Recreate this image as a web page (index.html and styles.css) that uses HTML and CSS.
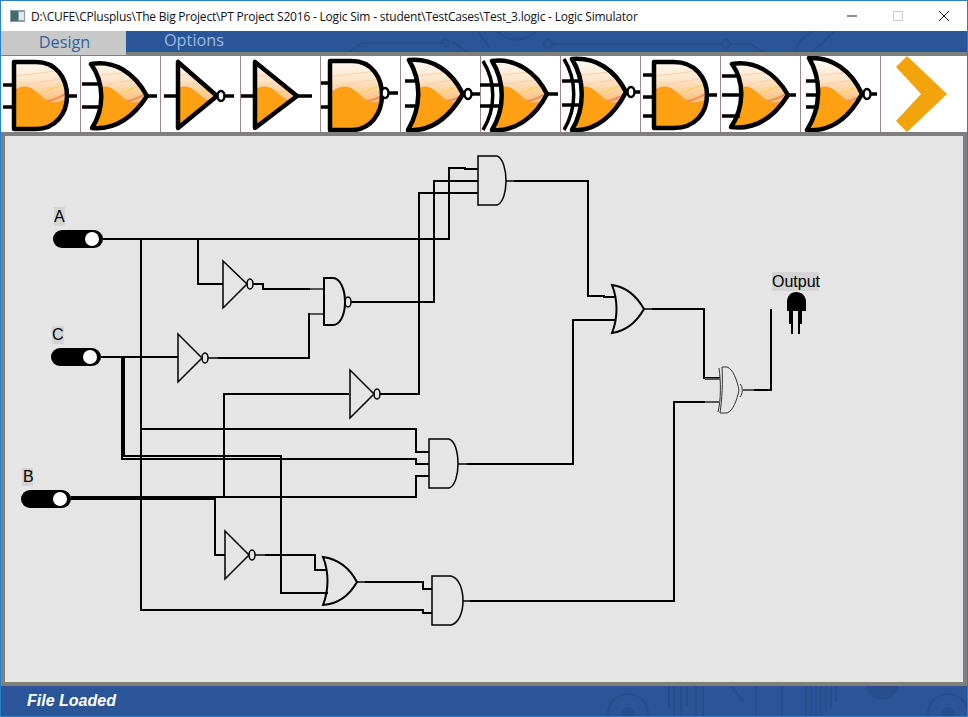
FILE: index.html
```html
<!DOCTYPE html>
<html lang="en">
<head>
    <meta charset="UTF-8">
    <title>Logic Simulator</title>
    <link rel="stylesheet" href="styles.css">
</head>
<body>

<svg class="defs" width="0" height="0">
    <defs>
        <linearGradient id="glow" x1="0" y1="0" x2="0" y2="1">
            <stop offset="0" stop-color="#ffffff"/>
            <stop offset="0.3" stop-color="#fde6cc"/>
            <stop offset="0.6" stop-color="#fbc07a"/>
        </linearGradient>

        <!-- gate bodies, one place each so fill and outline stay the same -->
        <path id="and-body" d="M14 6H36C56 6 67 22 67 40C67 58 55 73 36 73H14Z"/>
        <path id="or-body" d="M11 8C34 4 54 16 67 40C54 60 36 74 12 72C25 52 24 26 11 8Z"/>
        <path id="not-body" d="M18 6V72L57 40Z"/>
        <path id="buf-body" d="M15 6V72L57 40Z"/>
        <path id="nand-body" d="M10 5H32C52 5 62 22 62 39C62 58 50 74 32 74H10Z"/>
        <path id="nor-body" d="M9 4C32 2 51 14 63 38C50 60 32 76 8 74C21 52 22 26 9 4Z"/>
        <path id="xor-body" d="M12 5C36 2 56 16 67 38C56 60 36 76 12 74C25 52 25 26 12 5Z"/>
        <path id="xnor-body" d="M12 3C36 1 55 14 66 36C55 58 36 76 12 74C25 52 25 24 12 3Z"/>
        <path id="and3-body" d="M14 6H34C55 6 67 22 67 39C67 57 55 72 34 72H14Z"/>
        <path id="or3-body" d="M12 8C34 4 55 16 68 39C55 60 36 74 11 71C24 52 25 26 12 8Z"/>
        <path id="nor3-body" d="M9 2C32 1 51 14 62 38C50 60 32 76 7 74C21 52 22 24 9 2Z"/>

        <clipPath id="clip-and"><use href="#and-body"/></clipPath>
        <clipPath id="clip-or"><use href="#or-body"/></clipPath>
        <clipPath id="clip-not"><use href="#not-body"/></clipPath>
        <clipPath id="clip-buf"><use href="#buf-body"/></clipPath>
        <clipPath id="clip-nand"><use href="#nand-body"/></clipPath>
        <clipPath id="clip-nor"><use href="#nor-body"/></clipPath>
        <clipPath id="clip-xor"><use href="#xor-body"/></clipPath>
        <clipPath id="clip-xnor"><use href="#xnor-body"/></clipPath>
        <clipPath id="clip-and3"><use href="#and3-body"/></clipPath>
        <clipPath id="clip-or3"><use href="#or3-body"/></clipPath>
        <clipPath id="clip-nor3"><use href="#nor3-body"/></clipPath>

        <!-- the orange hill inside every toolbar gate -->
        <g id="fill">
            <rect x="0" y="0" width="80" height="76" fill="url(#glow)"/>
            <path d="M0 22L80 12M0 32L80 20" stroke="#fcd0a4" stroke-width="1" fill="none"/>
            <path d="M30 40L72 26" stroke="#ffd23c" stroke-width="1" fill="none"/>
            <path d="M40 46C50 46 60 42 72 34" stroke="#f58a5a" stroke-width="2" fill="none"/>
            <path d="M0 50C8 38 16 31 25 31C36 31 42 46 54 47C62 47 68 42 80 38V76H0Z" fill="#ffa012" stroke="#f29a2e"/>
        </g>
    </defs>
</svg>

<div class="window">

    <div class="titlebar">
        <svg class="app-icon" width="15" height="12" viewBox="0 0 15 12">
            <rect width="15" height="12" fill="#8d9ba6"/>
            <rect x="1" y="1" width="7" height="10" fill="#3f6f68"/>
            <rect x="9" y="2" width="5" height="8" fill="#dfe6ec"/>
        </svg>
        <span class="title">D:\CUFE\CPlusplus\The Big Project\PT Project S2016 - Logic Sim - student\TestCases\Test_3.logic - Logic Simulator</span>
        <div class="controls">
            <svg width="46" height="30" viewBox="0 0 46 30"><path d="M18 15H28" stroke="#222" fill="none"/></svg>
            <svg width="46" height="30" viewBox="0 0 46 30"><rect x="18.5" y="10.5" width="9" height="9" stroke="#ccc" fill="none"/></svg>
            <svg width="46" height="30" viewBox="0 0 46 30"><path d="M18 10L28 20M28 10L18 20" stroke="#222" fill="none"/></svg>
        </div>
    </div>

    <div class="menubar">
        <svg class="traces" width="966" height="21" viewBox="1 31 966 21">
            <path d="M347 54L362 43H445"/>
            <circle cx="445" cy="43" r="3.5"/>
            <path d="M450 40L478 60M475 28L490 48"/>
            <path d="M490 24C505 44 525 44 540 28" stroke-width="4"/>
            <circle cx="548" cy="44" r="4"/>
            <path d="M552 44H723" stroke-width="4"/>
            <circle cx="726" cy="44" r="4"/>
            <path d="M730 44H750L766 54"/>
            <path d="M795 54C797 40 806 30 830 28" stroke-width="8"/>
            <path d="M810 54L836 30" stroke-width="8"/>
        </svg>
        <div class="tab tab-on">Design</div>
        <div class="tab">Options</div>
    </div>

    <div class="toolbar">
        <div class="tool">
            <svg viewBox="0 0 80 76"><use href="#fill" clip-path="url(#clip-and)"/><use href="#and-body" class="outline"/><path class="pin" d="M3 29H14M3 51H14M67 40H77"/></svg>
        </div>
        <div class="tool">
            <svg viewBox="0 0 80 76"><use href="#fill" clip-path="url(#clip-or)"/><use href="#or-body" class="outline"/><path class="pin" d="M2 28H21M2 51H21M67 40H77"/></svg>
        </div>
        <div class="tool">
            <svg viewBox="0 0 80 76"><use href="#fill" clip-path="url(#clip-not)"/><use href="#not-body" class="outline"/><ellipse class="bubble" cx="61" cy="40" rx="3.5" ry="5"/><path class="pin" d="M4 40H18M65 40H74"/></svg>
        </div>
        <div class="tool">
            <svg viewBox="0 0 80 76"><use href="#fill" clip-path="url(#clip-buf)"/><use href="#buf-body" class="outline"/><path class="pin" d="M1 40H15M57 40H72"/></svg>
        </div>
        <div class="tool">
            <svg viewBox="0 0 80 76"><use href="#fill" clip-path="url(#clip-nand)"/><use href="#nand-body" class="outline"/><ellipse class="bubble" cx="65" cy="37" rx="3.5" ry="5"/><path class="pin" d="M1 27H10M1 51H10M69 37H78"/></svg>
        </div>
        <div class="tool">
            <svg viewBox="0 0 80 76"><use href="#fill" clip-path="url(#clip-nor)"/><use href="#nor-body" class="outline"/><ellipse class="bubble" cx="68" cy="38" rx="3.5" ry="5"/><path class="pin" d="M5 25H19M5 50H19M72 38H80"/></svg>
        </div>
        <div class="tool">
            <svg viewBox="0 0 80 76"><use href="#fill" clip-path="url(#clip-xor)"/><use href="#xor-body" class="outline"/><path class="arc" d="M3 5C16 26 16 52 3 74"/><path class="pin" d="M0 29H20M0 50H20M67 38H78"/></svg>
        </div>
        <div class="tool">
            <svg viewBox="0 0 80 76"><use href="#fill" clip-path="url(#clip-xnor)"/><use href="#xnor-body" class="outline"/><path class="arc" d="M4 3C17 24 17 52 4 74"/><ellipse class="bubble" cx="71" cy="36" rx="3.5" ry="5"/><path class="pin" d="M2 25H20M2 49H20M75 36H80"/></svg>
        </div>
        <div class="tool">
            <svg viewBox="0 0 80 76"><use href="#fill" clip-path="url(#clip-and3)"/><use href="#and3-body" class="outline"/><path class="pin" d="M3 19H14M3 41H14M3 60H14M67 39H77"/></svg>
        </div>
        <div class="tool">
            <svg viewBox="0 0 80 76"><use href="#fill" clip-path="url(#clip-or3)"/><use href="#or3-body" class="outline"/><path class="pin" d="M2 20H20M2 39H22M2 60H20M68 39H76"/></svg>
        </div>
        <div class="tool">
            <svg viewBox="0 0 80 76"><use href="#fill" clip-path="url(#clip-nor3)"/><use href="#nor3-body" class="outline"/><ellipse class="bubble" cx="67" cy="38" rx="3.5" ry="5"/><path class="pin" d="M6 25H19M6 39H20M6 51H19M71 38H77"/></svg>
        </div>
        <div class="tool tool-last">
            <svg viewBox="0 0 80 76"><path d="M27 0L67 38L27 76L16 65L41 38L16 11Z" fill="#f3a30b"/></svg>
        </div>
    </div>

    <div class="canvas">
        <svg class="circuit" width="959" height="546" viewBox="5 136 959 546">
            <!-- wires, in screen coordinates -->
            <g class="wires">
                <path d="M103 239H449V168H465V169H478"/>
                <path d="M141 239V610H423V613H432"/>
                <path d="M198 239V284H223"/>
                <path d="M253 284H263V289H310"/>
                <path d="M323 314H309V358H218"/>
                <path d="M101 357H178"/>
                <path d="M352 302H434V181H478"/>
                <path d="M380 394H419V193H478"/>
                <path d="M514 181H588V296H604V297H616"/>
                <path d="M616 320H573V464H467"/>
                <path d="M652 309H704V378H720"/>
                <path d="M720 402H674V601H470"/>
                <path d="M754 390H771V309"/>
                <path d="M349 394H224V497"/>
                <path d="M215 497H416V476H429"/>
                <path d="M71 498H215" class="wire-thick"/>
                <path d="M215 498V555H225"/>
                <path d="M265 555H315V570H326"/>
                <path d="M122 357V459H416V464H429"/>
                <path d="M124 357V456H281V593H328"/>
                <path d="M141 429H416V452H429"/>
                <path d="M365 582H423V589H432"/>
            </g>

            <!-- thin stubs where a gate output meets its wire -->
            <path class="stub" d="M255 555H265M208 358H218M380 394H382M506 181H514M644 309H652M458 464H467M463 601H470M357 582H365M351 302H356"/>

            <!-- gates -->
            <g class="gates">
                <path d="M223 261V308L247 284Z"/>
                <ellipse cx="250" cy="284" rx="3" ry="5"/>
                <path d="M178 334V382L202 358Z"/>
                <ellipse cx="205" cy="358" rx="3" ry="5"/>
                <path d="M350 370V418L374 394Z"/>
                <ellipse cx="377" cy="394" rx="3" ry="5"/>
                <path d="M225 531V579L249 555Z"/>
                <ellipse cx="252" cy="555" rx="3" ry="5"/>

                <path d="M324 278H333C340 278 345 289 345 302C345 315 340 325 333 325H324Z" class="gate-bold"/>
                <ellipse cx="348" cy="302" rx="3" ry="5"/>
                <path d="M478 156H497C503 158 506 170 506 181C506 192 503 203 497 205H478Z"/>
                <path d="M429 439H449C455 441 458 452 458 464C458 475 455 486 449 488H429Z"/>
                <path d="M432 576H451C459 578 463 589 463 601C463 612 459 623 451 625H432Z"/>

                <path d="M612 285C626 287 636 295 644 309C636 323 626 331 612 333C618 318 618 300 612 285Z" class="gate-bold"/>
                <path d="M323 557C337 559 349 567 357 582C349 596 337 604 323 605C329 590 329 572 323 557Z" class="gate-bold"/>

                <path d="M607 297H616M607 320H616" class="gate-bold"/>
                <path d="M315 570H326M315 593H328" class="gate-bold"/>

                <path d="M722 367H727C733 369 737 380 739 390C737 400 733 411 727 413H720C722 400 723 382 722 367Z" class="gate-thin"/>
                <path d="M719 368C721 382 721 400 718 412" class="gate-thin"/>
                <path d="M740 384C743 386 743 394 740 397" class="gate-thin"/>
                <path d="M705 379H720M705 402H720M743 390H754" class="gate-grey"/>
                <path d="M310 289H323M310 314H323" class="gate-grey"/>
            </g>

            <!-- switches -->
            <rect class="sw" x="53" y="230" width="50" height="18" rx="9"/>
            <circle class="knob" cx="92" cy="239" r="7"/>
            <rect class="sw" x="51" y="348" width="50" height="18" rx="9"/>
            <circle class="knob" cx="90" cy="357" r="7"/>
            <rect class="sw" x="21" y="490" width="50" height="18" rx="9"/>
            <circle class="knob" cx="60" cy="499" r="7"/>

            <!-- labels -->
            <rect class="tag" x="54" y="207" width="11" height="19"/>
            <text x="54" y="222">A</text>
            <rect class="tag" x="52" y="326" width="12" height="18"/>
            <text x="52" y="340">C</text>
            <rect class="tag" x="22" y="468" width="11" height="18"/>
            <text x="23" y="482">B</text>
            <rect class="tag" x="772" y="272" width="47" height="19"/>
            <text x="772" y="287">Output</text>

            <!-- output led -->
            <path d="M787 311V302C787 296 791 292 796 292C802 292 806 296 806 302V311Z"/>
            <path d="M789 311H793V334H791V324H789ZM798 311H802V324H800V334H798Z"/>
        </svg>
    </div>

    <div class="statusbar">
        <svg class="traces" width="966" height="30" viewBox="1 686 966 30">
            <circle cx="628" cy="714" r="20" stroke-width="8"/>
            <circle cx="628" cy="714" r="7" class="solid"/>
            <path d="M669 686V708M674 686V716M681 686V716M687 686V706M696 686V716M703 686V716" stroke-width="3"/>
            <path d="M731 686L744 702" stroke-width="5"/>
            <path d="M756 686V716" stroke-width="9"/>
            <path d="M782 686V716" stroke-width="7"/>
            <path d="M806 686V716M811 686V716M816 686V716M821 686V716M826 686V712M831 686V708M836 686V702" stroke-width="3"/>
            <path d="M866 686C868 704 896 704 898 686Z" class="solid"/>
            <circle cx="948" cy="714" r="20" stroke-width="8"/>
            <circle cx="948" cy="714" r="7" class="solid"/>
        </svg>
        <span class="status-text">File Loaded</span>
    </div>

</div>

</body>
</html>
```

FILE: styles.css
```css
html, body {
    margin: 0;
    padding: 0;
    background-color: #fff;
}
.defs {
    position: absolute;
}
.window {
    width: 968px;
    height: 717px;
    box-sizing: border-box;
    border: 1px solid #2b7fc4;
    display: flex;
    flex-direction: column;
    overflow: hidden;
}

/* title bar */
.titlebar {
    height: 30px;
    flex: none;
    display: flex;
    align-items: center;
    background-color: #fff;
    font-family: "Open Sans", sans-serif;
    font-size: 12px;
    letter-spacing: -0.21px;
    color: #111;
}
.app-icon {
    margin-left: 9px;
    margin-right: 6px;
    flex: none;
}
.title {
    white-space: nowrap;
    flex: 1;
}
.controls {
    display: flex;
}

/* menu */
.menubar {
    position: relative;
    height: 21px;
    flex: none;
    display: flex;
    background-color: #2a5699;
    font-family: "Open Sans", sans-serif;
    font-size: 16.3px;
}
.traces {
    position: absolute;
    left: 0;
    top: 0;
}
.traces path, .traces circle {
    fill: none;
    stroke: #264e8d;
    stroke-width: 2;
}
.traces .solid {
    fill: #264e8d;
    stroke: none;
}
.tab {
    position: relative;
    width: 125px;
    text-align: center;
    line-height: 18px;
    color: #9fb9dd;
    padding-left: 11px;
    box-sizing: border-box;
}
.tab-on {
    height: 24px;
    line-height: 22px;
    padding-left: 2px;
    background-color: #c8c8c8;
    color: #33609f;
    z-index: 1;
}

/* toolbar */
.toolbar {
    height: 80px;
    flex: none;
    display: flex;
    box-sizing: border-box;
    border-top: 4px solid #7f7f7f;
    background-color: #fff;
}
.tool {
    width: 80px;
    height: 76px;
    flex: none;
    box-sizing: border-box;
    border-right: 1px solid #9c8a8a;
}
.tool-last {
    border-right: none;
}
.tool svg {
    display: block;
    width: 80px;
    height: 76px;
    margin-left: -1px;
}
.outline {
    fill: none;
    stroke: #000;
    stroke-width: 4.5;
    stroke-linejoin: round;
}
.pin {
    fill: none;
    stroke: #000;
    stroke-width: 3.5;
}
.arc {
    fill: none;
    stroke: #000;
    stroke-width: 3.5;
}
.bubble {
    fill: #fff;
    stroke: #000;
    stroke-width: 2.5;
}

/* drawing area */
.canvas {
    flex: 1;
    min-height: 0;
    box-sizing: border-box;
    border: 4px solid #7f7f7f;
    background-color: #e5e5e5;
}
.circuit {
    display: block;
    font-family: "Liberation Sans", sans-serif;
    font-size: 16px;
    fill: #000;
}
.wires path {
    fill: none;
    stroke: #000;
    stroke-width: 2;
}
.wires .wire-thick {
    stroke-width: 4;
}
.stub {
    fill: none;
    stroke: #000;
    stroke-width: 1.5;
}
.gates path, .gates ellipse {
    fill: none;
    stroke: #000;
    stroke-width: 1.5;
}
.gates .gate-bold {
    stroke-width: 2;
}
.gates .gate-thin {
    stroke: #333;
    stroke-width: 1;
}
.gates .gate-grey {
    stroke: #555;
    stroke-width: 2;
}
.sw {
    fill: #000;
}
.knob {
    fill: #fff;
}
.tag {
    fill: #d4d4d4;
}

/* status bar */
.statusbar {
    position: relative;
    height: 30px;
    flex: none;
    display: flex;
    align-items: center;
    background-color: #2a5699;
}
.status-text {
    position: relative;
    margin-left: 26px;
    font-family: "Liberation Sans", sans-serif;
    font-size: 16px;
    font-weight: bold;
    font-style: italic;
    color: #fff;
}
```
